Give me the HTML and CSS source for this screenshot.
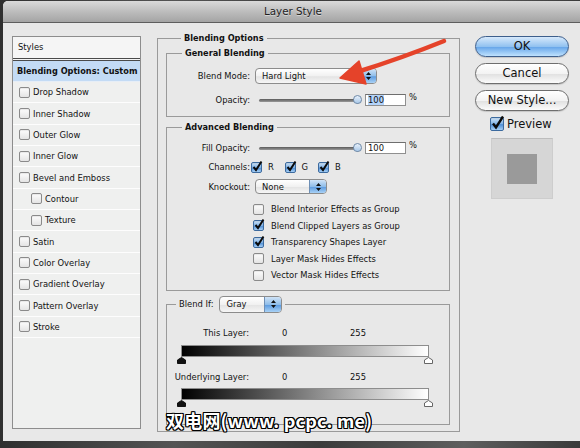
FILE: index.html
```html
<!DOCTYPE html>
<html>
<head>
<meta charset="utf-8">
<link rel="stylesheet" href="styles.css">
</head>
<body>
<div class="window">
  <div class="titlebar">Layer Style</div>
  <div class="content">
    <div class="styles-list">
      <div class="list-head">Styles</div>
      <div class="list-item selected">Blending Options: Custom</div>
      <div class="list-item"><span class="cb"></span>Drop Shadow</div>
      <div class="list-item"><span class="cb"></span>Inner Shadow</div>
      <div class="list-item"><span class="cb"></span>Outer Glow</div>
      <div class="list-item"><span class="cb"></span>Inner Glow</div>
      <div class="list-item"><span class="cb"></span>Bevel and Emboss</div>
      <div class="list-item sub"><span class="cb"></span>Contour</div>
      <div class="list-item sub"><span class="cb"></span>Texture</div>
      <div class="list-item"><span class="cb"></span>Satin</div>
      <div class="list-item"><span class="cb"></span>Color Overlay</div>
      <div class="list-item"><span class="cb"></span>Gradient Overlay</div>
      <div class="list-item"><span class="cb"></span>Pattern Overlay</div>
      <div class="list-item"><span class="cb"></span>Stroke</div>
    </div>

    <fieldset class="group outer">
      <legend>Blending Options</legend>

      <fieldset class="group inner general">
        <legend>General Blending</legend>
        <div class="row popup-row">
          <span class="lbl">Blend Mode:</span>
          <div class="popup blend"><span class="popup-text">Hard Light</span><span class="stepper"><svg width="7" height="10" viewBox="0 0 7 10"><path d="M3.5 1 L6 4 L1 4 Z M1 6 L6 6 L3.5 9 Z" fill="#111"/></svg></span></div>
        </div>
        <div class="row slider-row">
          <span class="lbl">Opacity:</span>
          <div class="slider"><span class="track"></span><span class="knob"></span></div>
          <span class="num-input"><span class="sel">100</span></span>
          <span class="pct">%</span>
        </div>
      </fieldset>

      <fieldset class="group inner advanced">
        <legend>Advanced Blending</legend>
        <div class="row slider-row">
          <span class="lbl">Fill Opacity:</span>
          <div class="slider"><span class="track"></span><span class="knob"></span></div>
          <span class="num-input">100</span>
          <span class="pct">%</span>
        </div>
        <div class="row channels-row">
          <span class="lbl">Channels:</span>
          <span class="chan"><span class="cb on"><svg width="12" height="12" viewBox="0 0 12 12"><path d="M2.5 6 L5 9 L10.5 0.5" fill="none" stroke="#0b0b0b" stroke-width="2"/></svg></span>R</span>
          <span class="chan"><span class="cb on"><svg width="12" height="12" viewBox="0 0 12 12"><path d="M2.5 6 L5 9 L10.5 0.5" fill="none" stroke="#0b0b0b" stroke-width="2"/></svg></span>G</span>
          <span class="chan"><span class="cb on"><svg width="12" height="12" viewBox="0 0 12 12"><path d="M2.5 6 L5 9 L10.5 0.5" fill="none" stroke="#0b0b0b" stroke-width="2"/></svg></span>B</span>
        </div>
        <div class="row knock-row">
          <span class="lbl">Knockout:</span>
          <div class="popup knock"><span class="popup-text">None</span><span class="stepper"><svg width="7" height="10" viewBox="0 0 7 10"><path d="M3.5 1 L6 4 L1 4 Z M1 6 L6 6 L3.5 9 Z" fill="#111"/></svg></span></div>
        </div>
        <div class="checks">
          <div class="check-row"><span class="cb"></span>Blend Interior Effects as Group</div>
          <div class="check-row"><span class="cb on"><svg width="12" height="12" viewBox="0 0 12 12"><path d="M2.5 6 L5 9 L10.5 0.5" fill="none" stroke="#0b0b0b" stroke-width="2"/></svg></span>Blend Clipped Layers as Group</div>
          <div class="check-row"><span class="cb on"><svg width="12" height="12" viewBox="0 0 12 12"><path d="M2.5 6 L5 9 L10.5 0.5" fill="none" stroke="#0b0b0b" stroke-width="2"/></svg></span>Transparency Shapes Layer</div>
          <div class="check-row"><span class="cb"></span>Layer Mask Hides Effects</div>
          <div class="check-row"><span class="cb"></span>Vector Mask Hides Effects</div>
        </div>
      </fieldset>

      <fieldset class="group inner blendif">
        <legend><span class="bi-label">Blend If:</span><span class="popup gray"><span class="popup-text">Gray</span><span class="stepper"><svg width="7" height="10" viewBox="0 0 7 10"><path d="M3.5 1 L6 4 L1 4 Z M1 6 L6 6 L3.5 9 Z" fill="#111"/></svg></span></span></legend>
        <div class="layer-row"><span class="lbl">This Layer:</span><span class="v0">0</span><span class="v255">255</span></div>
        <div class="gbar"></div>
        <div class="tri-row">
          <svg width="9" height="7" viewBox="0 0 9 7"><path d="M0.5 6.5 L0.5 3 L4.5 0.5 L8.5 3 L8.5 6.5 Z" fill="#111" stroke="#111"/></svg>
          <svg width="9" height="7" viewBox="0 0 9 7"><path d="M0.5 6.5 L0.5 3 L4.5 0.5 L8.5 3 L8.5 6.5 Z" fill="#fff" stroke="#666"/></svg>
        </div>
        <div class="layer-row under"><span class="lbl">Underlying Layer:</span><span class="v0">0</span><span class="v255">255</span></div>
        <div class="gbar"></div>
        <div class="tri-row">
          <svg width="9" height="7" viewBox="0 0 9 7"><path d="M0.5 6.5 L0.5 3 L4.5 0.5 L8.5 3 L8.5 6.5 Z" fill="#111" stroke="#111"/></svg>
          <svg width="9" height="7" viewBox="0 0 9 7"><path d="M0.5 6.5 L0.5 3 L4.5 0.5 L8.5 3 L8.5 6.5 Z" fill="#fff" stroke="#666"/></svg>
        </div>
      </fieldset>
    </fieldset>

    <div class="side">
      <div class="btn ok">OK</div>
      <div class="btn">Cancel</div>
      <div class="btn">New Style...</div>
      <div class="preview"><span class="cb big on"><svg width="15" height="15" viewBox="0 0 15 15"><path d="M3 7.5 L6 11.5 L13 0.5" fill="none" stroke="#0b0b0b" stroke-width="2.4"/></svg></span>Preview</div>
      <div class="swatch"><div class="swatch-inner"></div></div>
    </div>
  </div>
</div>

<svg class="arrow" width="580" height="448" viewBox="0 0 580 448">
  <path d="M444 41 Q402 58 357 72" fill="none" stroke="#e5432a" stroke-width="4.5" stroke-linecap="round"/>
  <path d="M340 78 L359 61 L366 84 Z" fill="#e5432a" stroke="#e5432a" stroke-width="1.5" stroke-linejoin="round"/>
</svg>

<div class="watermark">双电网(www. pcpc. me)</div>
</body>
</html>
```

FILE: styles.css
```css
* { box-sizing: border-box; }

body {
  margin: 0;
  width: 580px;
  height: 448px;
  overflow: hidden;
  position: relative;
  background: linear-gradient(90deg, #2f2f2f 0%, #545454 30%, #3b3b3b 55%, #5e5e5e 80%, #3a3a3a 100%);
  font-family: "DejaVu Sans", sans-serif;
  color: #111;
}

.window {
  margin: 1px 0 0 3px;
  width: 580px;
  height: 440px;
  background: #e8e8e8;
  border-radius: 5px 0 0 0;
  overflow: hidden;
}

.titlebar {
  height: 22px;
  border-bottom: 1px solid #5e5e5e;
  background: linear-gradient(#dadada, #bdbdbd 50%, #a4a4a4);
  text-align: center;
  font-size: 10.3px;
  line-height: 21px;
  color: #1e1e1e;
  text-shadow: 0 1px 0 rgba(255, 255, 255, 0.45);
}

.content {
  display: flex;
  align-items: flex-start;
  padding-left: 9px;
}

/* ---------- styles list ---------- */
.styles-list {
  margin-top: 13px;
  width: 129px;
  height: 393px;
  border: 1px solid #8d8d8d;
  background: #eff0ef;
  font-size: 8.4px;
}

.list-head {
  height: 24px;
  padding-left: 5px;
  line-height: 21px;
  background: #f5f5f5;
  border-bottom: 3px double #4a4a4a;
}

.list-item {
  height: 21.35px;
  display: flex;
  align-items: center;
  padding-left: 6px;
  border-bottom: 1px solid #fdfdfd;
  white-space: nowrap;
}

.list-item.selected {
  height: 21px;
  padding-left: 4px;
  background: #c3dbf5;
  font-weight: bold;
  font-size: 8.2px;
  border-bottom: 1px solid #e6eef7;
}

.list-item.sub { padding-left: 18px; }

.list-item .cb { margin-right: 3px; }

/* ---------- checkboxes ---------- */
.cb {
  position: relative;
  display: inline-block;
  flex: none;
  width: 11px;
  height: 11px;
  border: 1px solid #8a8a8a;
  border-radius: 2px;
  background: linear-gradient(#fdfdfd, #e4e4e4);
  box-shadow: inset 0 1px 1px rgba(0, 0, 0, 0.08);
}

.cb.on {
  border-color: #3c6a9e;
  background: linear-gradient(#cfe4f8, #7fb2e6 50%, #4f8fd6 55%, #a7d0f6);
}

.cb.on svg {
  position: absolute;
  left: -1px;
  top: -2px;
  overflow: visible;
}

.cb.big {
  width: 14px;
  height: 14px;
}

.cb.big svg { left: -1px; top: -2px; }

/* ---------- group boxes ---------- */
fieldset.group {
  margin: 0;
  border: 1px solid #9a9a9a;
  min-width: 0;
}

fieldset.group > legend {
  font-weight: bold;
  font-size: 8.2px;
  line-height: 10px;
  padding: 0 3px;
}

.outer {
  margin: 10px 0 0 16px !important;
  width: 303px;
  height: 399px;
  padding: 5px 9px 0 8px;
}

.outer > legend { margin-left: 15px; }

.inner {
  width: 284px;
  padding: 0;
}

.inner > legend { margin-left: 15px; }

.general { padding: 10px 0 10px 0; }
.advanced { margin-top: 5px !important; padding: 10px 0 6px 0; }
.blendif { margin-top: 5px !important; padding: 14px 0 0 0; height: 129px; }

.row {
  display: flex;
  align-items: center;
  font-size: 8.4px;
}

.lbl {
  width: 84px;
  flex: none;
  text-align: right;
  padding-right: 1px;
  white-space: nowrap;
}

.popup-row { height: 16px; }
.slider-row { height: 12px; margin-top: 10px; }
.general .slider-row { margin-top: 10px; }
.advanced .slider-row { margin-top: 0; }

/* popup button */
.popup {
  display: inline-flex;
  align-items: stretch;
  height: 16px;
  border: 1px solid #8c8c8c;
  border-radius: 4px;
  background: linear-gradient(#ffffff, #f1f1f1 50%, #e4e4e4 55%, #f6f6f6);
  overflow: hidden;
  font-size: 8.4px;
  font-weight: normal;
}

.popup-text {
  flex: 1;
  padding-left: 6px;
  line-height: 14px;
  white-space: nowrap;
}

.stepper {
  width: 17px;
  flex: none;
  display: flex;
  align-items: center;
  justify-content: center;
  border-left: 1px solid #6e8fb5;
  background: linear-gradient(#cfe3f7, #8fbde9 50%, #5e9ce0 55%, #a9d2f6);
}

.blend { width: 122px; margin-left: 4px; }
.knock { width: 72px; height: 15px; margin-left: 4px; }
.gray { width: 63px; height: 17px; margin-left: 6px; }
.gray .popup-text { line-height: 15px; }

/* slider */
.slider {
  position: relative;
  width: 103px;
  height: 12px;
  margin-left: 8px;
}

.track {
  position: absolute;
  left: 0;
  right: 4px;
  top: 5px;
  height: 3px;
  border-radius: 2px;
  background: linear-gradient(#5a5a5a, #9a9a9a);
}

.knob {
  position: absolute;
  right: 0;
  top: 1px;
  width: 9px;
  height: 9px;
  border: 1px solid #6f8aa8;
  border-radius: 50% 50% 45% 45%;
  background: linear-gradient(#e8f1fb, #a9c8e8);
}

.num-input {
  width: 41px;
  height: 12px;
  margin-left: 3px;
  border: 1px solid #8f8f8f;
  border-top-color: #6e6e6e;
  background: #fff;
  line-height: 10px;
  padding-left: 2px;
  font-size: 8.4px;
}

.sel { background: #b4d4fb; }

.pct {
  margin-left: 3px;
  align-self: flex-start;
  margin-top: -2px;
}

.channels-row { height: 12px; margin-top: 7px; }

.chan {
  display: inline-flex;
  align-items: center;
  width: 33.5px;
  flex: none;
}

.chan:first-of-type { margin-left: 3px; }
.chan .cb { margin-right: 6px; }

.knock-row { height: 15px; margin-top: 6px; }

.checks {
  margin-top: 7px;
  padding-left: 86px;
  font-size: 8.4px;
}

.check-row {
  height: 16.5px;
  display: flex;
  align-items: center;
  white-space: nowrap;
}

.check-row .cb { margin-right: 7px; }

/* blend if */
.blendif > legend {
  display: flex;
  align-items: center;
  margin-left: 9px;
  padding: 0 3px;
}

.bi-label {
  font-weight: normal;
  font-size: 8.4px;
}

.layer-row {
  display: flex;
  align-items: center;
  height: 12px;
  font-size: 8.4px;
}

.layer-row .lbl { width: 83px; }
.layer-row .v0 { margin-left: 32px; width: 68px; }

.layer-row.under { margin-top: 7px; }

.gbar {
  margin: 6px 0 0 14px;
  width: 248px;
  height: 12px;
  border: 1px solid #8d8d8d;
  background: linear-gradient(90deg, #000, #fff);
}

.under + .gbar { margin-top: 5px; }

.tri-row {
  display: flex;
  justify-content: space-between;
  width: 256px;
  margin: 0 0 0 10px;
  height: 7px;
}

.tri-row svg { display: block; }

/* side buttons */
.side {
  margin: 13px 0 0 15px;
  width: 94px;
  display: flex;
  flex-direction: column;
}

.btn {
  height: 21px;
  margin-bottom: 6px;
  border: 1px solid #6e6e6e;
  border-radius: 11px;
  background: linear-gradient(#ffffff, #f3f3f3 50%, #e2e2e2 55%, #fbfbfb);
  text-align: center;
  font-size: 11.5px;
  line-height: 19px;
  box-shadow: 0 1px 1px rgba(0, 0, 0, 0.15);
}

.btn.ok {
  border-color: #3e5f8c;
  background: linear-gradient(#d7e9fb, #92c2f0 50%, #6aa8ea 55%, #bfe2fe);
}

.preview {
  display: flex;
  align-items: center;
  height: 14px;
  margin: 0 0 0 15px;
  font-size: 11.5px;
}

.preview .cb { margin-right: 3px; }

.swatch {
  margin: 7px 0 0 16px;
  width: 62px;
  height: 61px;
  background: #d6d6d6;
  border: 1px solid #cdcdcd;
  border-top-color: #bdbdbd;
  display: flex;
  align-items: center;
  justify-content: center;
}

.swatch-inner {
  width: 30px;
  height: 30px;
  background: #9a9a9a;
}

/* overlays */
.arrow {
  position: absolute;
  left: 0;
  top: 0;
  pointer-events: none;
}

.watermark {
  position: absolute;
  left: 166px;
  top: 407px;
  font-family: "Noto Sans CJK SC", "Liberation Sans", sans-serif;
  font-size: 18px;
  font-weight: bold;
  letter-spacing: 0.2px;
  color: #fff;
  white-space: nowrap;
  text-shadow: 1px 0 0 #000, -1px 0 0 #000, 0 1px 0 #000, 0 -1px 0 #000,
               1px 1px 0 #000, -1px -1px 0 #000, 1px -1px 0 #000, -1px 1px 0 #000;
}
```
